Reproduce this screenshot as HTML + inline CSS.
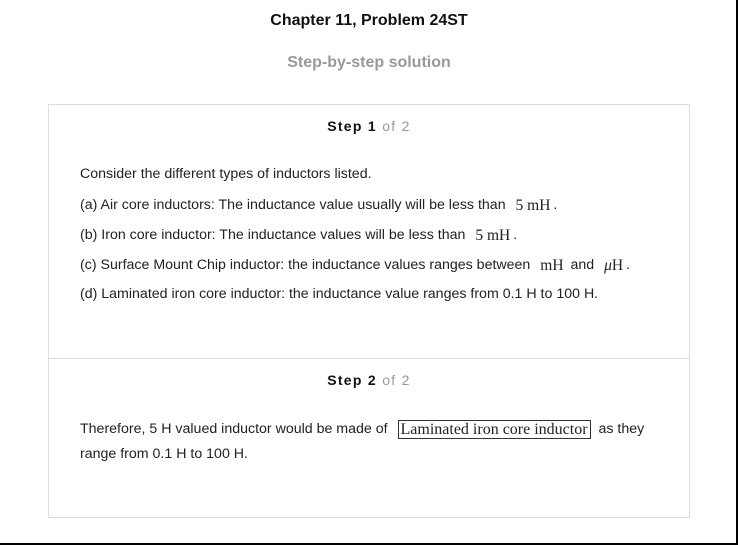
<!DOCTYPE html>
<html><head><meta charset="utf-8"><style>
*{margin:0;padding:0;box-sizing:border-box}
body{width:738px;height:545px;background:#fff;font-family:"Liberation Sans",Arial,sans-serif;color:#222;position:relative;overflow:hidden}
.frame{position:absolute;left:0;top:0;width:738px;height:545px;border-right:2px solid #000;border-bottom:2px solid #000}
.t{position:absolute;white-space:nowrap}
.h1{left:0;width:738px;text-align:center;top:12px;font-size:16px;font-weight:bold;color:#111}
.h2{left:0;width:738px;text-align:center;top:54px;font-size:16px;font-weight:bold;color:#999}
.card{position:absolute;left:48px;top:104px;width:642px;height:414px;border:1px solid #ddd}
.div{position:absolute;left:48px;top:358px;width:642px;height:1px;background:#ddd}
.step{left:48px;width:642px;text-align:center;font-size:14px;font-weight:bold;color:#111;letter-spacing:1.3px}
.step span{font-weight:normal;color:#999}
.p{left:80px;font-size:14.2px;color:#222}
.m{font-family:"Liberation Serif",serif;font-size:15.5px;position:relative;top:1px;margin:0 3px 0 6px}
.box{font-family:"Liberation Serif",serif;font-size:16px;border:1px solid #333;padding:0 2px;margin:0 4px 0 6px;position:relative;top:1px}
</style></head><body>
<div class="frame"></div>
<div class="t h1">Chapter 11, Problem 24ST</div>
<div class="t h2">Step-by-step solution</div>
<div class="card"></div>
<div class="div"></div>
<div class="t step" style="top:118px">Step 1 <span>of 2</span></div>
<div class="t p" style="top:166px">Consider the different types of inductors listed.</div>
<div class="t p" style="top:196px">(a) Air core inductors: The inductance value usually will be less than <span class="m">5 mH</span>.</div>
<div class="t p" style="top:226px">(b) Iron core inductor: The inductance values will be less than <span class="m">5 mH</span>.</div>
<div class="t p" style="top:256px">(c) Surface Mount Chip inductor: the inductance values ranges between <span class="m">mH</span> and <span class="m"><i>μ</i>H</span>.</div>
<div class="t p" style="top:286px">(d) Laminated iron core inductor: the inductance value ranges from 0.1 H to 100 H.</div>
<div class="t step" style="top:372px">Step 2 <span>of 2</span></div>
<div class="t p" style="top:420px">Therefore, 5 H valued inductor would be made of <span class="box">Laminated iron core inductor</span> as they</div>
<div class="t p" style="top:446px">range from 0.1 H to 100 H.</div>
</body></html>
